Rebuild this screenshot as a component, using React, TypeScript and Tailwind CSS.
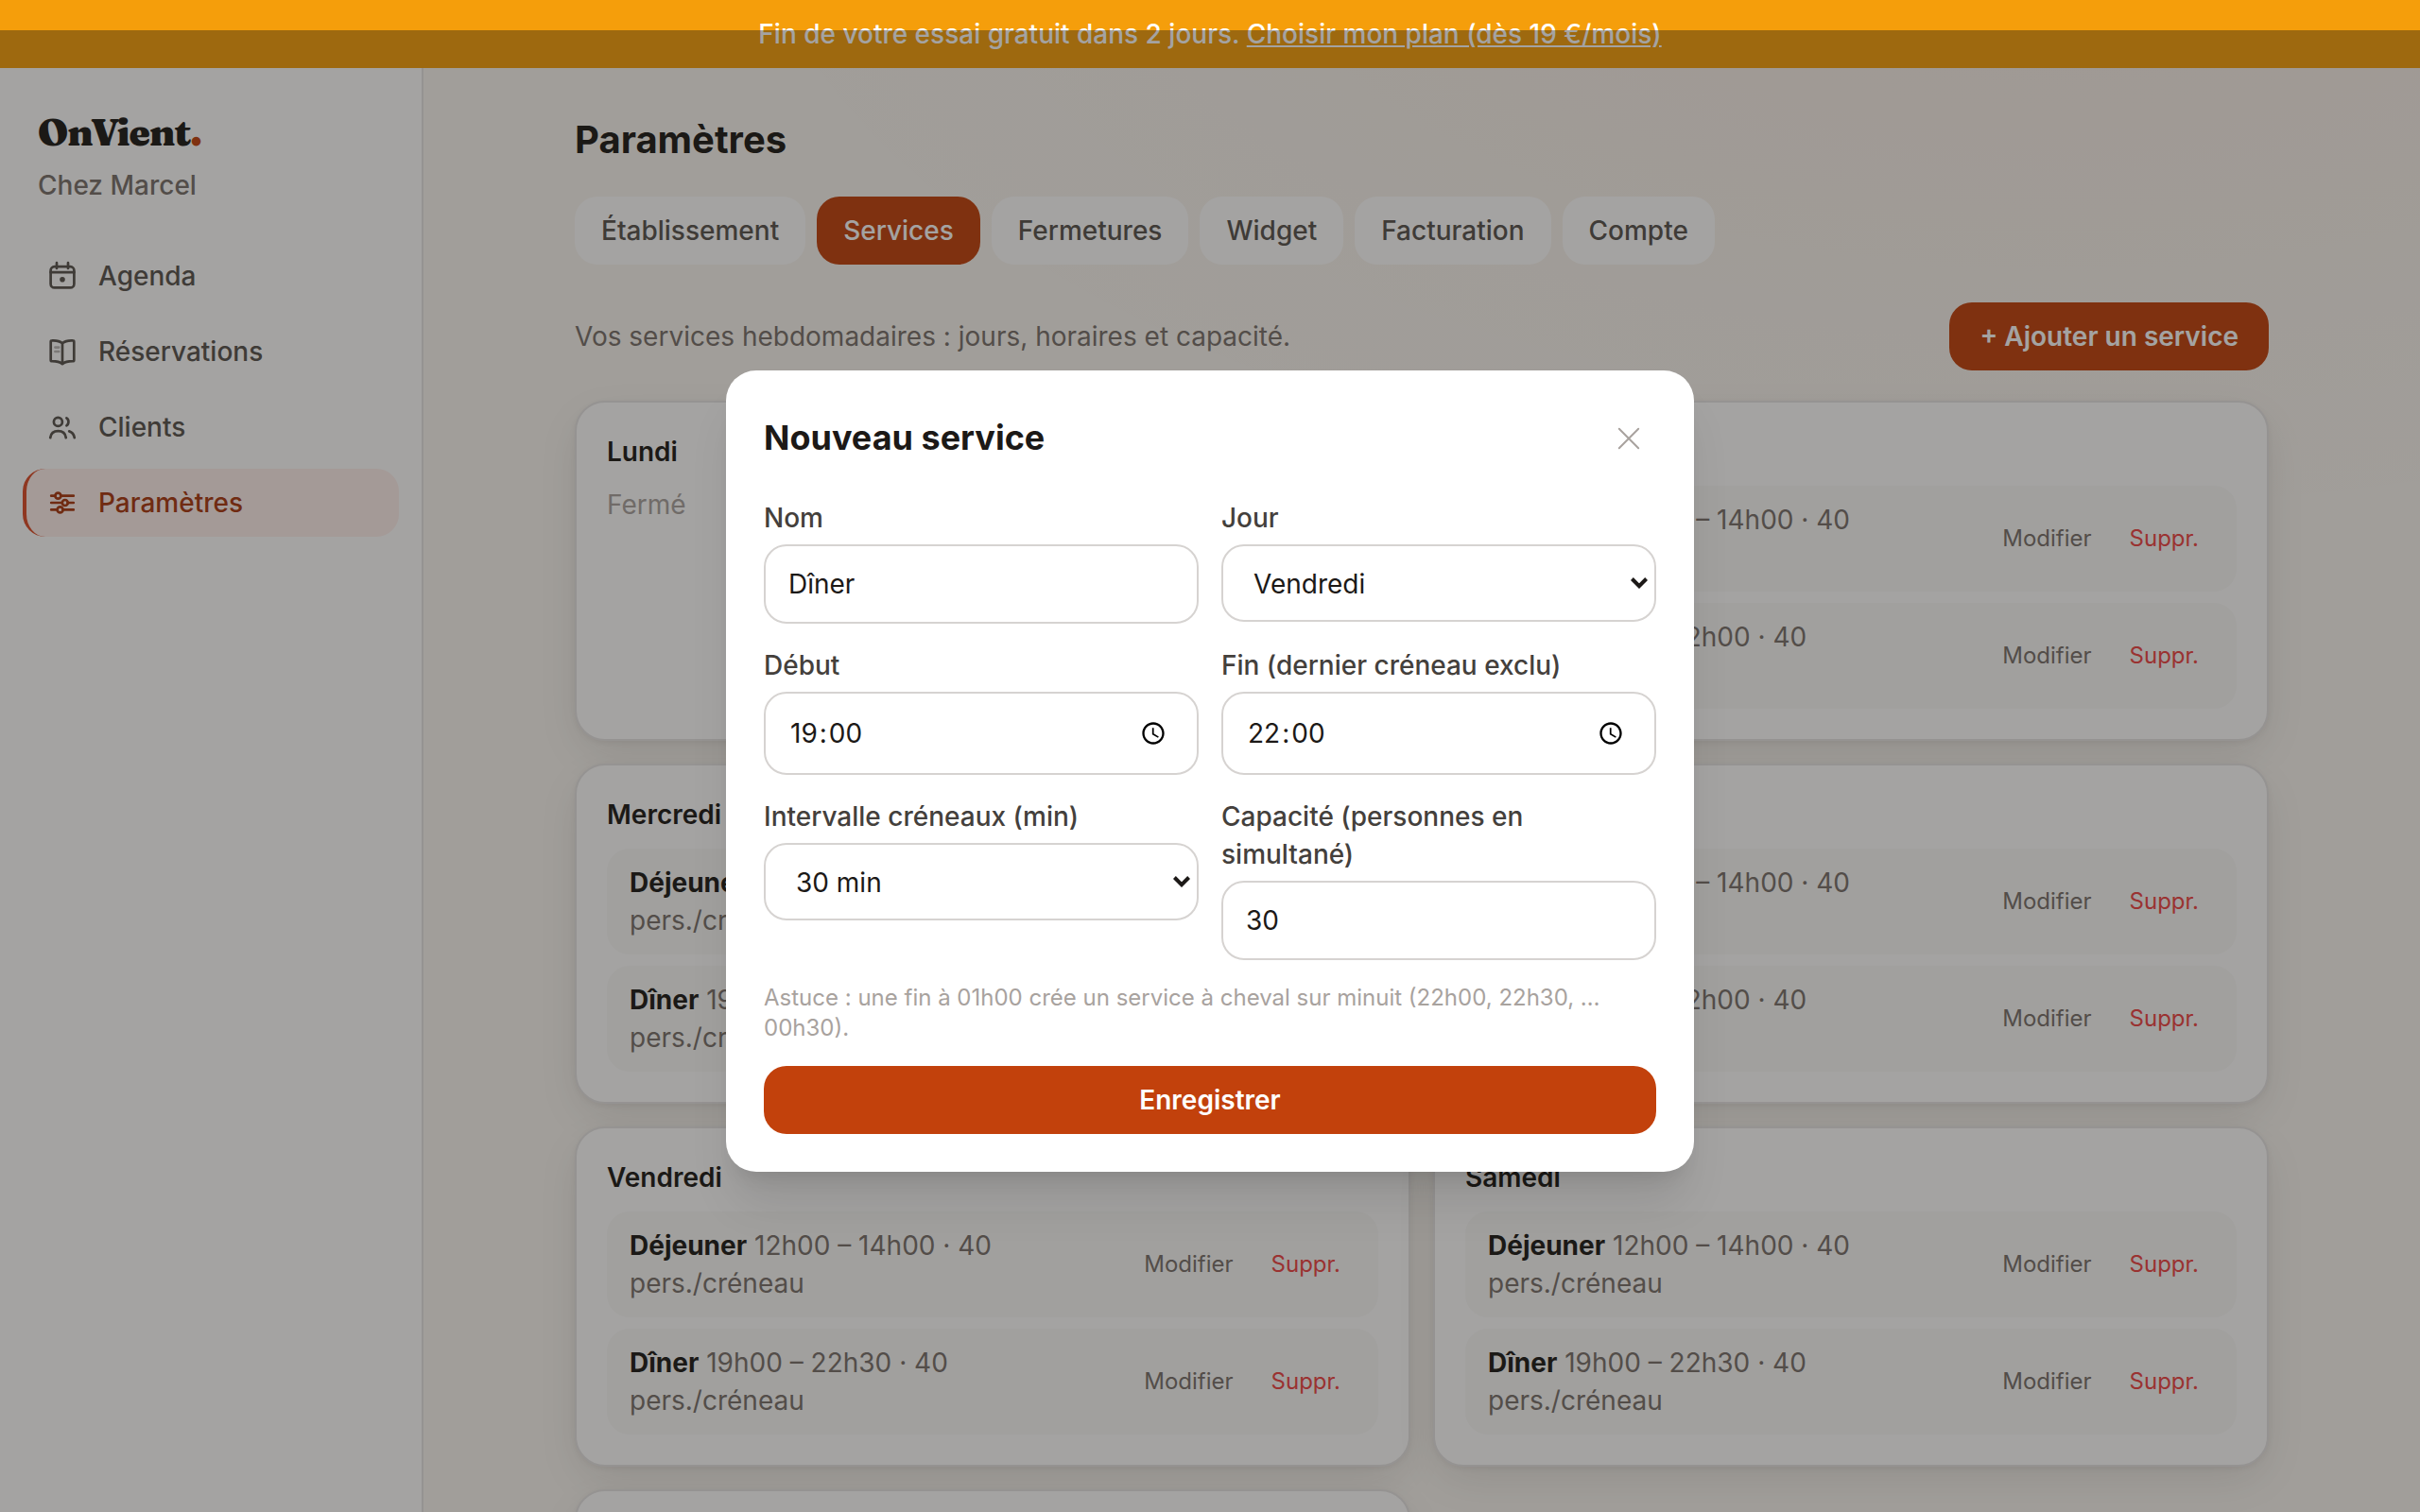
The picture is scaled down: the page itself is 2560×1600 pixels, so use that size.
import React from "react";

type Slot = { name: string; hours: string };
type Day = { day: string; slots: Slot[] };

const LUNCH: Slot = { name: "Déjeuner", hours: "12h00 – 14h00 · 40" };
const DINNER: Slot = { name: "Dîner", hours: "19h00 – 22h00 · 40" };
const LATE_DINNER: Slot = { name: "Dîner", hours: "19h00 – 22h30 · 40" };

const DAYS: Day[] = [
  { day: "Lundi", slots: [] },
  { day: "Mardi", slots: [LUNCH, DINNER] },
  { day: "Mercredi", slots: [LUNCH, DINNER] },
  { day: "Jeudi", slots: [LUNCH, DINNER] },
  { day: "Vendredi", slots: [LUNCH, LATE_DINNER] },
  { day: "Samedi", slots: [LUNCH, LATE_DINNER] },
];

const TABS = ["Établissement", "Services", "Fermetures", "Widget", "Facturation", "Compte"];

function NavIcon({ children }: { children: React.ReactNode }) {
  return (
    <svg
      viewBox="0 0 18 18"
      className="size-9 shrink-0"
      fill="none"
      stroke="currentColor"
      strokeWidth="1.35"
      strokeLinecap="round"
      strokeLinejoin="round"
    >
      {children}
    </svg>
  );
}

const CalendarIcon = () => (
  <NavIcon>
    <rect x="2.8" y="4.1" width="12.4" height="11.1" rx="2" />
    <path d="M2.8 7.1h12.4M6 2.1v2.9M12 2.1v2.9" />
    <circle cx="9" cy="10.9" r="1.4" fill="currentColor" stroke="none" />
  </NavIcon>
);

const BookIcon = () => (
  <NavIcon>
    <path d="M9 4.6C7.6 3.4 5.4 3.1 3.5 3.2c-.4 0-.65.3-.65.65v9.6c0 .35.25.65.65.65 2 0 4.1.3 5.5 1.5 1.4-1.2 3.5-1.5 5.5-1.5.4 0 .65-.3.65-.65v-9.6c0-.35-.25-.65-.65-.65C12.6 3.1 10.4 3.4 9 4.6zM9 4.6v11" />
    <path d="M5.2 6.8h1.9M5.2 9h1.9" opacity="0.4" />
  </NavIcon>
);

const UsersIcon = () => (
  <NavIcon>
    <circle cx="6.7" cy="6.2" r="2.25" />
    <path d="M2.6 14.6C2.9 12.4 4.5 11.1 6.75 11.1s3.85 1.3 4.15 3.5" />
    <path d="M11.2 4.2c1.35.6 1.35 3.3 0 4" />
    <path d="M12.6 11.2c1.6.5 2.5 1.7 2.8 3.4" />
  </NavIcon>
);

const SlidersIcon = () => (
  <NavIcon>
    <path d="M3.1 5.35h2.1M8.2 5.35h6.7M3.1 9h5.7M11.8 9h3.1M3.1 12.7h3.2M9.3 12.7h5.6" />
    <circle cx="6.7" cy="5.35" r="1.5" />
    <circle cx="10.4" cy="9" r="1.5" />
    <circle cx="7.8" cy="12.7" r="1.5" />
  </NavIcon>
);

const NAV = [
  { label: "Agenda", Icon: CalendarIcon, active: false },
  { label: "Réservations", Icon: BookIcon, active: false },
  { label: "Clients", Icon: UsersIcon, active: false },
  { label: "Paramètres", Icon: SlidersIcon, active: true },
];

function Sidebar() {
  return (
    <aside className="flex w-[448px] shrink-0 flex-col border-r-2 border-[#e7e5e4] bg-white pt-10">
      <div className="px-10">
        <p className="font-[Fraunces] text-[40px] leading-[56px] font-black tracking-tight text-[#1c1917]">
          OnVient<span className="text-[#c2410c]">.</span>
        </p>
        <p className="mt-2 text-[28px] leading-10 font-medium text-[#78716c]">Chez Marcel</p>
      </div>
      <nav className="mt-10 flex flex-col gap-2 px-6">
        {NAV.map(({ label, Icon, active }) => (
          <a
            key={label}
            className={
              active
                ? "flex items-center gap-5 rounded-3xl border-l-4 border-[#dc4c28] bg-[#fff0ed] px-5 py-4 text-[28px] leading-10 font-medium text-[#a8380f]"
                : "flex items-center gap-5 rounded-3xl border-l-4 border-transparent px-5 py-4 text-[28px] leading-10 font-medium text-[#57534e]"
            }
          >
            <Icon />
            {label}
          </a>
        ))}
      </nav>
    </aside>
  );
}

function Card({ children }: { children?: React.ReactNode }) {
  return (
    <section className="min-h-[360px] rounded-[32px] border-2 border-[#e7e5e4] bg-white p-8 shadow-[0_2px_6px_rgba(28,25,23,0.06),0_16px_48px_-8px_rgba(28,25,23,0.12)]">
      {children}
    </section>
  );
}

function DayCard({ day, slots }: Day) {
  return (
    <Card>
      <h3 className="text-[28px] leading-10 font-semibold text-[#1c1917]">{day}</h3>
      {slots.length === 0 ? (
        <p className="mt-4 text-[28px] leading-10 text-[#a8a29e]">Fermé</p>
      ) : (
        <ul className="mt-4 flex flex-col gap-3">
          {slots.map((slot) => (
            <li
              key={slot.name}
              className="flex items-center justify-between rounded-3xl bg-[#fafaf9] px-6 py-4"
            >
              <p className="text-[28px] leading-10 text-[#78716c]">
                <span className="font-bold text-[#1c1917]">{slot.name}</span> {slot.hours} pers./créneau
              </p>
              <div className="flex shrink-0 gap-2 text-2xl leading-8">
                <button className="px-4 py-2 text-[#78716c]">Modifier</button>
                <button className="px-4 py-2 text-[#ef4444]">Suppr.</button>
              </div>
            </li>
          ))}
        </ul>
      )}
    </Card>
  );
}

function Field({ label, children }: { label: string; children: React.ReactNode }) {
  return (
    <label className="flex flex-col gap-2">
      <span className="text-[28px] leading-10 font-medium text-[#44403c]">{label}</span>
      {children}
    </label>
  );
}

function TextBox({ value }: { value: string }) {
  return (
    <input
      defaultValue={value}
      className="h-[84px] w-full rounded-3xl border-2 border-[#d6d3d1] bg-white px-6 text-[28px] leading-10 text-[#1c1917] outline-none"
    />
  );
}

function SelectBox({ value }: { value: string }) {
  return (
    <div className="flex h-[82px] items-center justify-between rounded-3xl border-2 border-[#d6d3d1] bg-white pr-[7px] pl-8 text-[28px] leading-10 text-[#1c1917]">
      <span className="pt-0.5">{value}</span>
      <svg viewBox="0 0 18 12" className="h-3 w-[18px]" fill="none" stroke="currentColor" strokeWidth="4">
        <path d="M1.4 1.5 9 9.1l7.6-7.6" />
      </svg>
    </div>
  );
}

function TimeBox({ hours, minutes }: { hours: string; minutes: string }) {
  return (
    <div className="flex h-[88px] items-center justify-between rounded-3xl border-2 border-[#d6d3d1] bg-white pr-8 pl-6 text-[28px] leading-10 text-[#1c1917]">
      <span className="flex">
        <span className="px-0.5">{hours}</span>:<span className="px-0.5">{minutes}</span>
      </span>
      <svg viewBox="0 0 24 24" className="size-7" fill="black">
        <path d="M11.99 2C6.47 2 2 6.48 2 12s4.47 10 9.99 10C17.52 22 22 17.52 22 12S17.52 2 11.99 2zM12 20c-4.42 0-8-3.58-8-8s3.58-8 8-8 8 3.58 8 8-3.58 8-8 8zm.5-13H11v6l5.25 3.15.75-1.23-4.5-2.67z" />
      </svg>
    </div>
  );
}

function ServiceDialog() {
  return (
    <div className="absolute inset-x-0 top-8 bottom-0 flex items-center justify-center bg-[#1c1917]/40">
      <div
        role="dialog"
        className="w-[1024px] rounded-[32px] bg-white p-10 shadow-[0_40px_50px_-10px_rgba(0,0,0,0.1),0_16px_20px_-12px_rgba(0,0,0,0.1)]"
      >
        <div className="mb-8 flex items-center justify-between">
          <h2 className="mb-0.5 text-4xl leading-[56px] font-bold text-[#1c1917]">Nouveau service</h2>
          <button aria-label="Fermer" className="flex h-16 w-[58px] items-center justify-center text-[#a8a29e]">
            <svg
              viewBox="0 0 24 24"
              className="size-6"
              fill="none"
              stroke="currentColor"
              strokeWidth="2"
              strokeLinecap="round"
            >
              <path d="M1.8 1.8l20.4 20.4M22.2 1.8 1.8 22.2" />
            </svg>
          </button>
        </div>
        <div className="grid grid-cols-2 gap-6">
          <Field label="Nom">
            <TextBox value="Dîner" />
          </Field>
          <Field label="Jour">
            <SelectBox value="Vendredi" />
          </Field>
          <Field label="Début">
            <TimeBox hours="19" minutes="00" />
          </Field>
          <Field label="Fin (dernier créneau exclu)">
            <TimeBox hours="22" minutes="00" />
          </Field>
          <Field label="Intervalle créneaux (min)">
            <SelectBox value="30 min" />
          </Field>
          <Field label="Capacité (personnes en simultané)">
            <TextBox value="30" />
          </Field>
        </div>
        <p className="mt-6 text-2xl leading-8 text-[#a8a29e]">
          Astuce : une fin à 01h00 crée un service à cheval sur minuit (22h00, 22h30, … 00h30).
        </p>
        <button className="mt-6 w-full rounded-3xl bg-[#c2410c] py-4 text-[28px] leading-10 font-semibold text-white">
          Enregistrer
        </button>
      </div>
    </div>
  );
}

export default function App() {
  return (
    <div className="relative flex h-[1600px] w-[2560px] flex-col overflow-hidden bg-[#faf7f2] bg-[radial-gradient(2400px_1200px_at_85%_-10%,rgba(194,65,12,0.06),transparent_60%)] font-[Inter,sans-serif]">
      <div className="shrink-0 bg-[#f59e0b] py-4 text-center text-[28px] leading-10 font-medium text-white">
        Fin de votre essai gratuit dans 2 jours. <a className="underline">Choisir mon plan (dès 19 €/mois)</a>
      </div>
      <div className="flex min-h-0 flex-1">
        <Sidebar />
        <main className="min-w-0 flex-1 pt-12">
          <div className="mx-auto flex w-[1792px] flex-col gap-8">
            <h1 className="text-[40px] leading-[56px] font-bold text-[#1c1917]">Paramètres</h1>
            <div className="flex gap-3">
              {TABS.map((tab) => (
                <button
                  key={tab}
                  className={
                    tab === "Services"
                      ? "rounded-3xl bg-[#c2410c] px-7 py-4 text-[28px] leading-10 font-medium text-white"
                      : "rounded-3xl bg-white px-7 py-4 text-[28px] leading-10 font-medium text-[#57534e]"
                  }
                >
                  {tab}
                </button>
              ))}
            </div>
            <div className="mt-2 flex items-center justify-between">
              <p className="text-[28px] leading-10 text-[#78716c]">
                Vos services hebdomadaires : jours, horaires et capacité.
              </p>
              <button className="rounded-3xl bg-[#c2410c] px-8 py-4 text-[28px] leading-10 font-semibold text-white">
                + Ajouter un service
              </button>
            </div>
            <div className="grid grid-cols-2 gap-6">
              {DAYS.map((d) => (
                <DayCard key={d.day} {...d} />
              ))}
              <Card />
            </div>
          </div>
        </main>
      </div>
      <ServiceDialog />
    </div>
  );
}
